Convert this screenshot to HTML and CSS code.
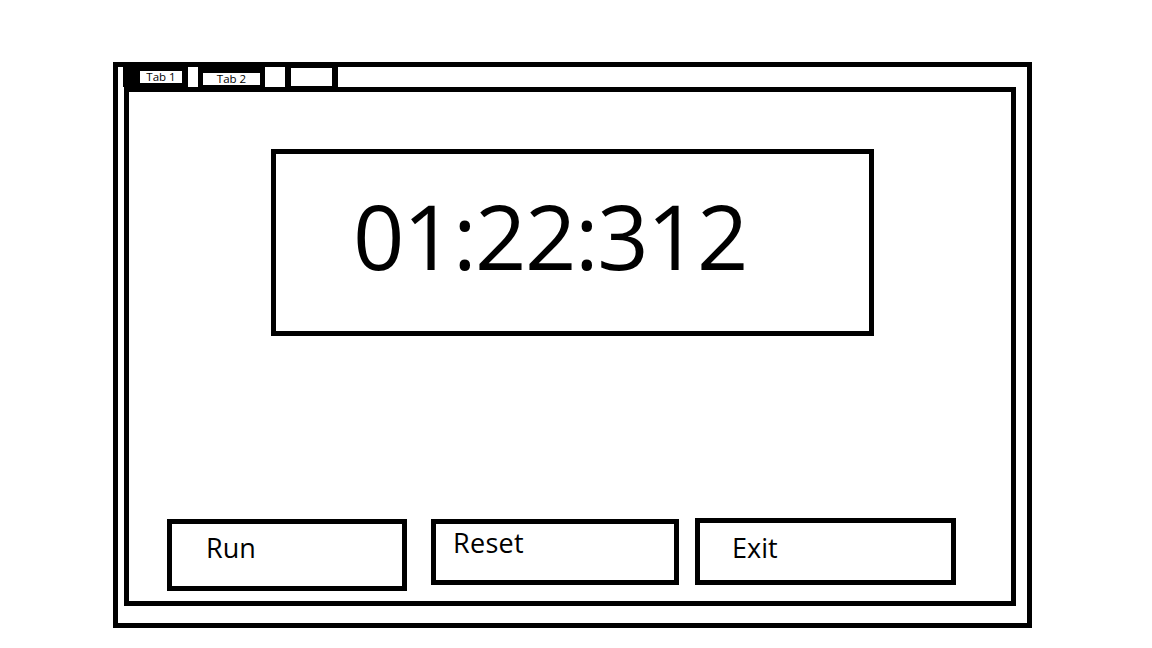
FILE: index.html
```html
<!DOCTYPE html>
<html>
<head>
<meta charset="utf-8">
<link rel="stylesheet" href="styles.css">
</head>
<body>
<div class="window">
  <div class="tabs">
    <div class="tab tab1">Tab 1</div>
    <div class="tab tab2">Tab 2</div>
    <div class="tab tab3"></div>
  </div>
  <div class="panel">
    <div class="timer">01:22:312</div>
    <div class="spacer"></div>
    <div class="buttons">
      <div class="btn run">Run</div>
      <div class="btn reset">Reset</div>
      <div class="btn exit">Exit</div>
    </div>
  </div>
</div>
</body>
</html>
```
FILE: styles.css
```css
html, body {
  margin: 0;
  padding: 0;
  background: #fff;
}
body {
  font-family: "Open Sans", "Noto Sans", sans-serif;
  color: #000;
}
.window {
  box-sizing: border-box;
  margin: 62px 0 0 113px;
  width: 919px;
  height: 566px;
  border: 5px solid #000;
  display: flex;
  flex-direction: column;
}
.tabs {
  height: 20px;
  display: flex;
  align-items: flex-start;
  flex: none;
}
.tab {
  box-sizing: border-box;
  border-style: solid;
  border-color: #000;
  background: #fff;
  font-size: 11.5px;
  line-height: 12px;
  text-align: center;
  color: #000;
}
.tab1 {
  margin-left: 5px;
  width: 65px;
  height: 20px;
  border-width: 4px 6px 4px 17px;
}
.tab2 {
  margin-left: 10px;
  width: 67px;
  height: 20px;
  border-width: 6px 5px 2px 5px;
}
.tab3 {
  margin-left: 20px;
  width: 53px;
  height: 24px;
  border-width: 1px 6px 5px 6px;
}
.panel {
  box-sizing: border-box;
  margin: 0 11px 17px 6px;
  flex: 1;
  border: 5px solid #000;
  display: flex;
  flex-direction: column;
}
.timer {
  box-sizing: border-box;
  margin: 57px 0 0 142px;
  width: 603px;
  height: 187px;
  border: 5px solid #000;
  padding: 36px 0 0 77px;
  font-size: 90px;
  line-height: 1;
  letter-spacing: -1.5px;
  flex: none;
}
.spacer {
  flex: 1;
}
.buttons {
  display: flex;
  align-items: flex-start;
  margin: 0 0 10px 38px;
  flex: none;
}
.btn {
  box-sizing: border-box;
  border: 5px solid #000;
  font-size: 27px;
  line-height: 1;
}
.run {
  margin-top: 1px;
  width: 240px;
  height: 72px;
  padding: 10px 0 0 34px;
}
.reset {
  margin-top: 1px;
  margin-left: 24px;
  width: 248px;
  height: 66px;
  padding: 5px 0 0 17px;
  letter-spacing: 0.3px;
}
.exit {
  margin-left: 16px;
  width: 261px;
  height: 67px;
  padding: 11px 0 0 32px;
}
```
